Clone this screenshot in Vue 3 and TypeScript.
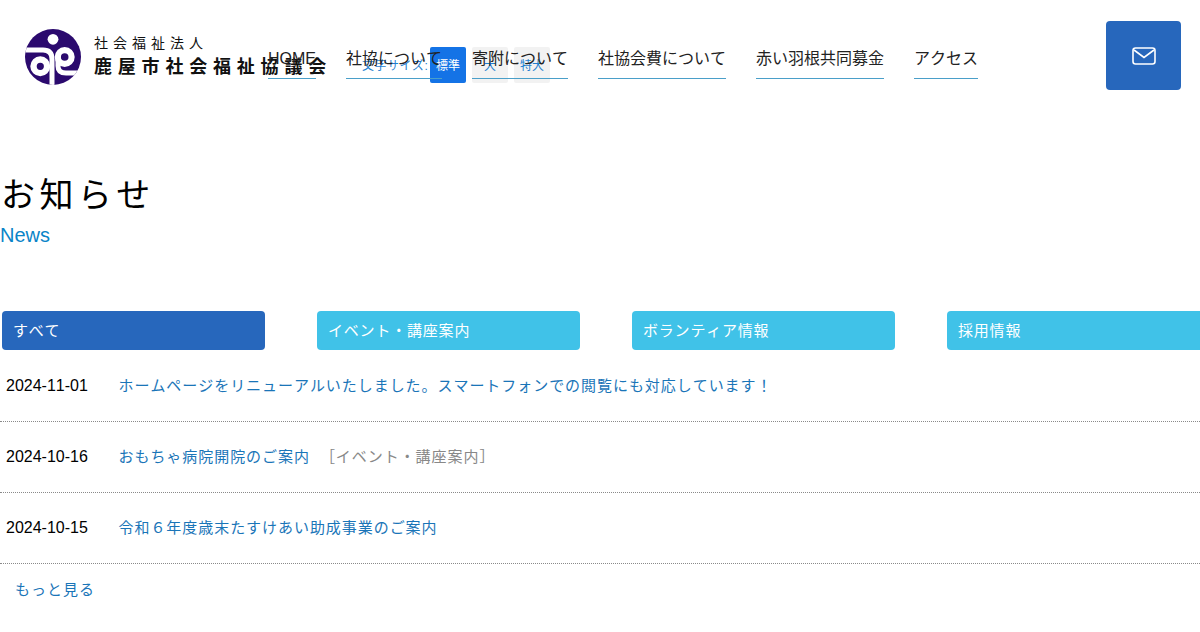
<script setup lang="ts">
const nav: string[] = ['HOME', '社協について', '寄附について', '社協会費について', '赤い羽根共同募金', 'アクセス']
const tabs: string[] = ['すべて', 'イベント・講座案内', 'ボランティア情報', '採用情報']
const news = [
  { date: '2024-11-01', title: 'ホームページをリニューアルいたしました。スマートフォンでの閲覧にも対応しています！', cat: '' },
  { date: '2024-10-16', title: 'おもちゃ病院開院のご案内', cat: '［イベント・講座案内］' },
  { date: '2024-10-15', title: '令和６年度歳末たすけあい助成事業のご案内', cat: '' },
]
</script>

<template>
  <div class="page">
    <header class="header">
      <a class="logo">
        <svg class="mark" viewBox="0 0 56 56" width="56" height="56">
          <defs>
            <clipPath id="disc"><circle cx="28" cy="28" r="28" /></clipPath>
          </defs>
          <circle cx="28" cy="28" r="28" fill="#2b0a6e" />
          <g clip-path="url(#disc)" fill="none" stroke="#fff">
            <circle cx="28" cy="10.3" r="5.4" fill="#fff" stroke="none" />
            <path d="M-1 21 H18 C24 21 27 24 27 30 V58" stroke-width="5" />
            <circle cx="15.3" cy="37.3" r="6.8" stroke-width="6.4" />
            <circle cx="39.7" cy="28" r="6.9" stroke-width="6.2" />
            <path d="M33 28 V37 C33 42 36 44 41 44 H56" stroke-width="5" />
          </g>
        </svg>
        <span class="logo-text">
          <span class="logo-sub">社会福祉法人</span>
          <span class="logo-main">鹿屋市社会福祉協議会</span>
        </span>
      </a>
      <nav class="nav">
        <a v-for="item in nav" :key="item" class="nav-item">{{ item }}</a>
      </nav>
      <div class="size-widget">
        <span class="size-label">文字サイズ:</span>
        <button class="size-btn active">標準</button>
        <button class="size-btn">大</button>
        <button class="size-btn">特大</button>
      </div>
      <a class="mail">
        <svg viewBox="0 0 24 18" width="24" height="18" fill="none" stroke="#fff" stroke-width="1.6">
          <rect x="1" y="1" width="22" height="16" rx="2.5" />
          <path d="M2 3 L12 10.5 L22 3" />
        </svg>
      </a>
    </header>

    <section class="heading">
      <h1 class="title">お知らせ</h1>
      <p class="subtitle">News</p>
    </section>

    <div class="tabs">
      <a v-for="(tab, i) in tabs" :key="tab" class="tab" :class="{ current: i === 0 }">{{ tab }}</a>
    </div>

    <ul class="list">
      <li v-for="n in news" :key="n.date" class="row">
        <time class="date">{{ n.date }}</time>
        <a class="link">{{ n.title }}</a>
        <span v-if="n.cat" class="cat">{{ n.cat }}</span>
      </li>
    </ul>

    <a class="more">もっと見る</a>
  </div>
</template>

<style>
html, body { margin: 0; background: #fff; overflow: hidden; }
</style>

<style scoped>
.page {
  position: relative;
  width: 1200px;
  height: 632px;
  overflow: hidden;
  font-family: "Liberation Sans", "Noto Sans CJK JP", sans-serif;
  font-kerning: none;
  color: #000;
}
.header {
  position: relative;
  display: flex;
  align-items: flex-start;
  height: 176px;
}
.logo {
  display: flex;
  align-items: flex-start;
  gap: 13px;
  width: 243px;
  margin: 29px 0 0 25px;
  flex: none;
}
.mark { flex: none; display: block; }
.logo-text { display: flex; flex-direction: column; white-space: nowrap; color: #111; padding-top: 5px; }
.logo-sub { font-size: 14px; line-height: 18px; letter-spacing: 5px; }
.logo-main { font-size: 18px; line-height: 26px; letter-spacing: 5.8px; font-weight: 700; margin-top: 2px; }
.nav {
  display: flex;
  gap: 30px;
  margin-top: 38px;
  position: relative;
  z-index: 2;
}
.nav-item {
  display: block;
  min-width: 48px;
  font-size: 16px;
  line-height: 42px;
  height: 41px;
  box-sizing: border-box;
  border-bottom: 1px solid #4a9fc9;
  color: #222;
  white-space: nowrap;
}
.size-widget {
  position: absolute;
  left: 362px;
  top: 47px;
  display: flex;
  align-items: center;
  gap: 6px;
  z-index: 1;
}
.size-label {
  font-size: 12px;
  color: #1f7fd0;
  letter-spacing: 0.5px;
  width: 62px;
  white-space: nowrap;
  margin-top: -2px;
}
.size-btn {
  width: 36px;
  height: 36px;
  padding: 0 0 2px;
  border: 0;
  border-radius: 2px;
  background: #f2f2f2;
  color: #1f7fd0;
  font: inherit;
  font-size: 12px;
}
.size-btn.active { background: #1473e6; color: #fff; }
.mail {
  position: absolute;
  left: 1106px;
  top: 21px;
  width: 75px;
  height: 69px;
  border-radius: 4px;
  background: #2767bc;
  display: flex;
  align-items: center;
  justify-content: center;
}
.title {
  margin: 0 0 0 1px;
  font-size: 34px;
  font-weight: 400;
  letter-spacing: 4.4px;
  line-height: 38px;
}
.subtitle {
  margin: 9px 0 0;
  font-size: 20px;
  line-height: 24px;
  color: #0a84c8;
}
.tabs {
  display: flex;
  gap: 52px;
  margin: 64px 0 1px 2px;
}
.tab {
  flex: none;
  width: 263px;
  height: 39px;
  box-sizing: border-box;
  padding-left: 11px;
  border-radius: 4px;
  background: #40c2e8;
  color: #fff;
  font-size: 15px;
  letter-spacing: 0.8px;
  line-height: 39px;
}
.tab.current { background: #2767bc; }
.list { list-style: none; margin: 0; padding: 0; }
.row {
  display: flex;
  align-items: center;
  height: 71px;
  box-sizing: border-box;
  border-bottom: 1px dotted #8a8a8a;
  padding: 0 0 4px 6px;
  font-size: 15px;
  letter-spacing: 0.95px;
}
.date { width: 113px; flex: none; font-size: 16px; letter-spacing: 0; color: #000; padding-top: 3px; }
.link { color: #1a75b8; white-space: nowrap; margin-left: -0.5px; }
.cat { margin-left: 10px; color: #888; white-space: nowrap; }
.more {
  display: block;
  margin: 15px 0 0 15px;
  font-size: 15px;
  letter-spacing: 1px;
  line-height: 22px;
  color: #1a75b8;
}
</style>
